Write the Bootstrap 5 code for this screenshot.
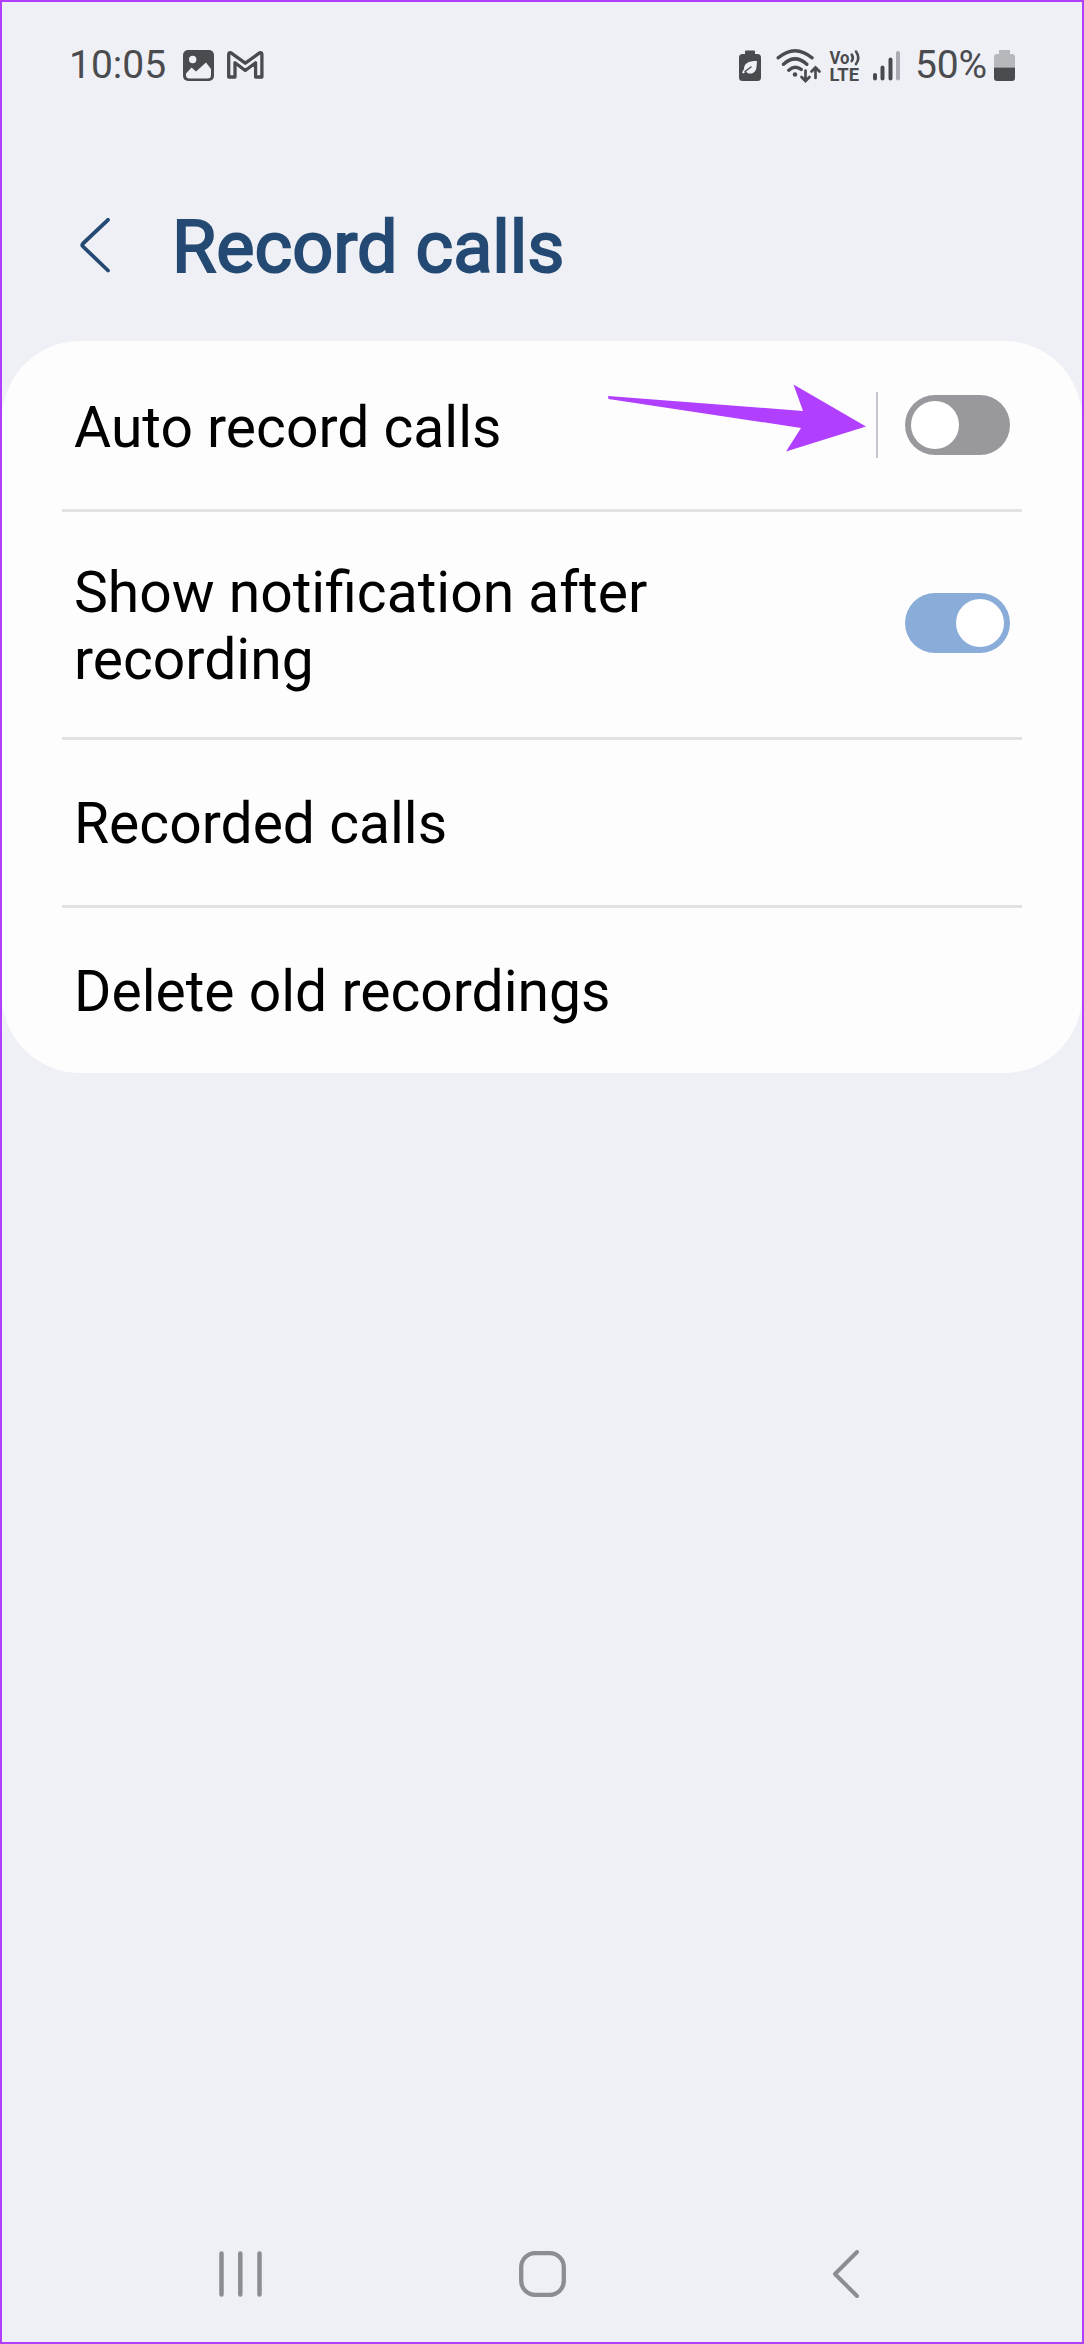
<!DOCTYPE html>
<html lang="en">
<head>
<meta charset="utf-8">
<meta name="viewport" content="width=device-width, initial-scale=1">
<title>Record calls</title>
<link rel="stylesheet" href="https://cdn.jsdelivr.net/npm/bootstrap@5.3.0/dist/css/bootstrap.min.css">
<style>
  body { font-family: Roboto, sans-serif; background: #eff0f5; }
  svg { display: block; flex: none; }
  .phone { width: 1084px; height: 2344px; border: 2px solid #b13fff; background: #eff0f5; overflow: hidden; }
  .status-bar { height: 86px; padding: 40px 67px 0; color: #4a4b4e; font-size: 39px; line-height: 46px; }
  .status-time { width: 114px; }
  .status-percent { width: 79px; letter-spacing: -.2px; }
  .title-bar { height: 253px; padding: 114px 0 0 77px; color: #244a73; }
  .title-bar h1 { margin: 3px 0 0 57px; font-size: 72px; font-weight: 400; line-height: 86px; -webkit-text-stroke: 2px #244a73; }
  .settings-card { background: #fdfdfe; border-radius: 78px; padding: 0 60px; }
  .setting { padding: 2px 12px 0 12px; border-bottom: 3px solid #e2e2e2; color: #000; font-size: 57px; line-height: 67px; height: 168px; }
  .setting.first { height: 171px; padding-top: 4px; }
  .setting.tall { height: 228px; padding-top: 3px; }
  .setting.last { height: 165px; border-bottom: 0; padding-top: 1px; }
  .toggle { width: 105px; height: 60px; border-radius: 30px; padding: 6px; background: #99989d; margin-top: -4px; }
  .toggle.on { background: #8aacd9; margin-top: -6px; }
  .knob { width: 48px; height: 48px; border-radius: 50%; background: #fff; }
  .split { width: 2px; height: 66px; background: #c6c6d0; margin: -4px 27px 0 0; }
  .pointer { left: 530px; top: 43px; }
  .nav-keys { padding: 0 0 44px 217px; }
  .home-key { margin: 0 266px 0 257px; }
</style>
</head>
<body>
<div class="phone d-flex flex-column">
  <header class="status-bar d-flex justify-content-between">
    <div class="d-flex">
      <span class="status-time">10:05</span>
      <svg width="82" height="46" viewBox="183 42 82 46" aria-label="Notifications">
        <rect x="183" y="50" width="31" height="31" rx="5" fill="#4a4b4e"/>
        <circle cx="192.7" cy="59.5" r="3.7" fill="#eff0f5"/>
        <path d="M186 73.500L191.500 67.500 196 71.500 206 62.500 211 69V75a3.500 3.500 0 0 1-3.500 3.500h-18a3.500 3.500 0 0 1-3.500-3.500z" fill="#eff0f5"/>
        <path d="M228.700 54.500Q228.700 52 231 52.800L245.300 63.200 259.600 52.800Q261.900 52 261.900 54.500V77H255.600V62.700L245.300 70.500 235 62.700V77H228.700Z" fill="#eff0f5" stroke="#4a4b4e" stroke-width="3.300" stroke-linejoin="round"/>
      </svg>
    </div>
    <div class="d-flex">
      <svg width="180" height="46" viewBox="735 42 180 46" fill="none" stroke="#4a4b4e" stroke-linecap="round">
        <path d="M746 50.500h8a1 1 0 0 1 1 1v2.500h2.500a3.500 3.500 0 0 1 3.500 3.500v20a3.500 3.500 0 0 1-3.500 3.500h-15a3.500 3.500 0 0 1-3.500-3.500v-20a3.500 3.500 0 0 1 3.500-3.500h2.500v-2.500a1 1 0 0 1 1-1z" fill="#4a4b4e" stroke="none"/>
        <path d="M757 61c-9 0-13 2.500-13 8l-2 3.500 1.500 1 2.500-2c2 2.500 5 2.500 7 1.500 4-2 3.500-7 4-12z" fill="#eff0f5" stroke="none"/>
        <path d="M745 71.500l6-4.500" stroke-width="1.500"/>
        <g stroke-width="3.400">
          <path d="M778.200 57.800Q795 43.500 812 57.800M783.500 64.300Q795 53.500 806.800 64.300M788.800 70.200Q795 64.800 801.200 69.400"/>
          <path d="M805.500 70.500V80M801.500 77l4 4 4-4M815.500 78V68.500M811.500 71.500l4-4 4 4" stroke-width="2.700"/>
          <path d="M851.700 54.500q2.200 3.300 0 6.600M856 51.500q4.500 6.300 0 12.600" stroke-width="2.600"/>
        </g>
        <circle cx="795" cy="74.500" r="2.300" fill="#4a4b4e" stroke="none"/>
        <g fill="#4a4b4e" stroke="none" font-family="Roboto, sans-serif" font-weight="700">
          <text x="829.500" y="64" font-size="17.500" textLength="20" lengthAdjust="spacingAndGlyphs">Vo</text>
          <text x="829.500" y="80.500" font-size="18" textLength="29.500" lengthAdjust="spacingAndGlyphs">LTE</text>
        </g>
        <path d="M875 75v3.500M882.500 67.500v11M890.500 59.500v19" stroke-width="4"/>
        <path d="M898 53v25.500" stroke="#a9adb3" stroke-width="4"/>
      </svg>
      <span class="status-percent">50%</span>
      <svg width="21" height="46" viewBox="994 42 21 46">
        <path d="M999 50h11v4h2q3 0 3 3v10.500h-21V57q0-3 3-3h2z" fill="#b6b8bc"/>
        <path d="M994 67.500h21V78q0 3-3 3h-15q-3 0-3-3z" fill="#4a4b4e"/>
      </svg>
    </div>
  </header>

  <div class="title-bar d-flex">
    <svg class="mt-3" width="36" height="60" viewBox="79 218 36 60" fill="none" stroke="#244a73" stroke-width="3.800" stroke-linecap="round" stroke-linejoin="round"><path d="M108 219.800L83 243.500q-1.500 1.500 0 3L108 270.500"/></svg>
    <h1>Record calls</h1>
  </div>

  <main class="settings-card position-relative">
    <div class="setting first d-flex align-items-center">
      <span class="flex-grow-1">Auto record calls</span>
      <div class="split"></div>
      <div class="toggle" role="switch" aria-checked="false"><div class="knob"></div></div>
    </div>
    <div class="setting tall d-flex align-items-center justify-content-between">
      <span>Show notification after<br>recording</span>
      <div class="toggle on d-flex justify-content-end" role="switch" aria-checked="true"><div class="knob"></div></div>
    </div>
    <div class="setting d-flex align-items-center">Recorded calls</div>
    <div class="setting last d-flex align-items-center">Delete old recordings</div>
    <svg class="pointer position-absolute" width="340" height="70" viewBox="532 384 340 70"><path d="M608 396L803 411 793.500 384.500 866 426.500 786 451.500 801 428 608.500 399z" fill="#b13fff"/></svg>
  </main>

  <nav class="nav-keys d-flex align-items-center mt-auto">
    <svg width="43" height="46" viewBox="0 0 43 46" fill="none" stroke="#8c8d91" stroke-width="4.500" stroke-linecap="round"><path d="M2.500 2.500v41M21.300 2.500v41M40.500 2.500v41"/></svg>
    <svg class="home-key" width="47" height="46" viewBox="0 0 47 46" fill="none" stroke="#8c8d91" stroke-width="4.300"><rect x="2.200" y="2.200" width="42.600" height="41.600" rx="14"/></svg>
    <svg width="28" height="48" viewBox="0 0 28 48" fill="none" stroke="#8c8d91" stroke-width="4" stroke-linecap="round" stroke-linejoin="round"><path d="M25 2L3 24 25 46"/></svg>
  </nav>
</div>
<script src="https://cdn.jsdelivr.net/npm/bootstrap@5.3.0/dist/js/bootstrap.bundle.min.js"></script>
</body>
</html>
